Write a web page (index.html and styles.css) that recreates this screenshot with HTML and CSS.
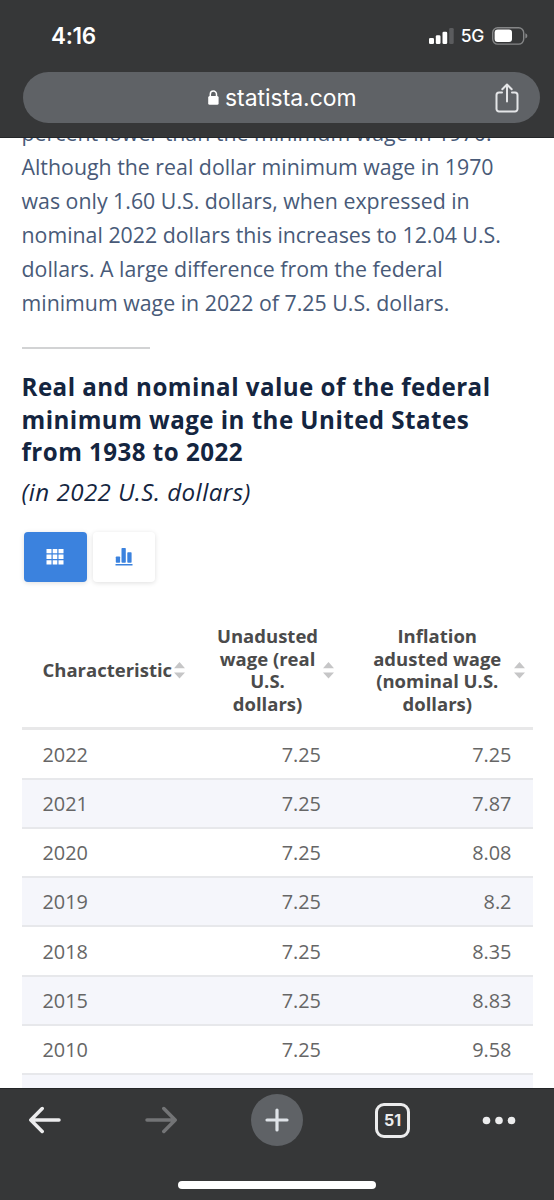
FILE: index.html
```html
<!DOCTYPE html>
<html lang="en">
<head>
<meta charset="utf-8">
<title>statista.com</title>
<link rel="stylesheet" href="styles.css">
</head>
<body>
<div class="screen">
  <header class="top">
    <div class="status">
      <span class="time">4:16</span>
      <div class="indicators">
        <svg class="signal" width="25" height="16" viewBox="0 0 25 16"><rect x="0" y="10" width="5" height="6" rx="1.3" fill="#fff"/><rect x="6.8" y="7.3" width="4.7" height="8.7" rx="1.3" fill="#fff"/><rect x="13.5" y="3.7" width="4.7" height="12.3" rx="1.3" fill="#fff"/><rect x="20.2" y="0" width="4.5" height="16" rx="1.3" fill="#5b5c5e"/></svg>
        <span class="network">5G</span>
        <svg class="battery" width="36" height="18" viewBox="0 0 36 18"><rect x=".7" y=".7" width="31" height="16.4" rx="5" fill="none" stroke="#858687" stroke-width="1.4"/><rect x="2.6" y="2.6" width="17.4" height="12.4" rx="3" fill="#fff"/><path d="M33.400 6.200Q35.400 7 35.400 8.900T33.400 11.600z" fill="#858687"/></svg>
      </div>
    </div>
    <div class="address">
      <svg class="lock" width="11" height="15" viewBox="0 0 11 15"><rect x=".2" y="6" width="10.400" height="8.700" rx="1.500" fill="#fff"/><path d="M2.300 7V4.200a3.100 3.100 0 0 1 6.200 0V7" fill="none" stroke="#fff" stroke-width="1.500"/></svg>
      <span class="domain">statista.com</span>
      <svg class="share" width="24" height="30" viewBox="0 0 24 30" fill="none" stroke="#e4e5e7" stroke-width="2" stroke-linecap="round" stroke-linejoin="round"><path d="M7 9.500H4A2.500 2.500 0 0 0 1.500 12v14A2.500 2.500 0 0 0 4 28.500h16a2.500 2.500 0 0 0 2.500-2.500V12A2.500 2.500 0 0 0 20 9.500h-3M12 18.500V2M7.300 6.300 12 1.500l4.700 4.800"/></svg>
    </div>
  </header>
  <main class="page">
    <p class="intro">percent lower than the minimum wage in 1970.<br>Although the real dollar minimum wage in 1970<br>was only 1.60 U.S. dollars, when expressed in<br>nominal 2022 dollars this increases to 12.04 U.S.<br>dollars. A large difference from the federal<br>minimum wage in 2022 of 7.25 U.S. dollars.</p>
    <div class="divider"></div>
    <h1 class="title">Real and nominal value of the federal<br>minimum wage in the United States<br>from 1938 to 2022</h1>
    <p class="subtitle">(in 2022 U.S. dollars)</p>
    <div class="views">
      <div class="view active"><svg width="18" height="16" viewBox="0 0 18 16" fill="#fff"><path d="M.5 0h5v4.200h-5zM6.700 0h4.600v4.200H6.700zM12.500 0h5v4.200h-5zM.5 5.500h5v4.400h-5zM6.700 5.500h4.600v4.400H6.700zM12.500 5.500h5v4.400h-5zM.5 11.200h5v4.200h-5zM6.700 11.200h4.600v4.200H6.700zM12.500 11.200h5v4.200h-5z"/></svg></div>
      <div class="view"><svg width="18" height="18" viewBox="0 0 18 18" fill="#3b82de"><rect x=".8" y="8.500" width="4.300" height="6.300" rx=".7"/><rect x="6.500" y="0" width="4.300" height="14.800" rx=".7"/><rect x="12.300" y="4.200" width="4.300" height="10.600" rx=".7"/><rect x=".5" y="16" width="17" height="1.500"/></svg></div>
    </div>
    <div class="table">
      <div class="row head">
        <div class="name">Characteristic<svg class="sort" width="11" height="17" viewBox="0 0 11 17"><path d="M5.500 0 11 6.200H0zM0 10.600h11l-5.500 6z"/></svg></div>
        <div class="real">Unadusted<br>wage (real<br>U.S.<br>dollars)<svg class="sort" width="11" height="17" viewBox="0 0 11 17"><path d="M5.500 0 11 6.200H0zM0 10.600h11l-5.500 6z"/></svg></div>
        <div>Inflation<br>adusted wage<br>(nominal U.S.<br>dollars)<svg class="sort" width="11" height="17" viewBox="0 0 11 17"><path d="M5.500 0 11 6.200H0zM0 10.600h11l-5.500 6z"/></svg></div>
      </div>
      <div class="row"><span>2022</span><span>7.25</span><span>7.25</span></div>
      <div class="row shade"><span>2021</span><span>7.25</span><span>7.87</span></div>
      <div class="row"><span>2020</span><span>7.25</span><span>8.08</span></div>
      <div class="row shade"><span>2019</span><span>7.25</span><span>8.2</span></div>
      <div class="row"><span>2018</span><span>7.25</span><span>8.35</span></div>
      <div class="row shade"><span>2015</span><span>7.25</span><span>8.83</span></div>
      <div class="row"><span>2010</span><span>7.25</span><span>9.58</span></div>
      <div class="row shade"></div>
    </div>
  </main>
  <footer class="bottom">
    <div class="tools">
      <svg width="32" height="28" viewBox="0 0 32 28" fill="none" stroke="#ececed" stroke-width="3.500" stroke-linecap="round" stroke-linejoin="round"><path d="M30 14H2.500M13.200 2.500 1.800 14l11.400 11.500"/></svg>
      <svg class="forward" width="32" height="28" viewBox="0 0 32 28" fill="none" stroke="#737476" stroke-width="3.500" stroke-linecap="round" stroke-linejoin="round"><path d="M2 14h27.500M18.800 2.500 30.200 14 18.800 25.500"/></svg>
      <div class="plus"><svg width="24" height="24" viewBox="0 0 24 24" stroke="#dfe3e8" stroke-width="3.200" stroke-linecap="round"><path d="M2 12h20M12 2v20"/></svg></div>
      <div class="tabs">51</div>
      <svg width="34" height="9" viewBox="0 0 34 9" fill="#ececed"><circle cx="4.500" cy="4.500" r="3.800"/><circle cx="17" cy="4.500" r="3.800"/><circle cx="29.500" cy="4.500" r="3.800"/></svg>
    </div>
    <div class="home"></div>
  </footer>
</div>
</body>
</html>
```
FILE: styles.css
```css
* { box-sizing: border-box; }
body { margin: 0; background: #fff; }
p, h1 { margin: 0; }
svg { display: block; flex: none; }
.screen {
  width: 554px; height: 1200px; overflow: hidden;
  display: flex; flex-direction: column;
  font-family: "Open Sans", sans-serif;
}
.top { height: 138px; flex: none; background: #363738; border-bottom: 1px solid #242628; }
.status { height: 72px; padding: 0 26px 2px 51px; display: flex; justify-content: space-between; align-items: center; color: #fff; font-family: Inter, sans-serif; }
.time { font-size: 22.5px; font-weight: 600; letter-spacing: -.3px; }
.indicators { display: flex; align-items: center; }
.signal, .battery { margin-top: 1px; }
.network { font-size: 17.5px; font-weight: 450; margin: 1px 8px 0 7px; letter-spacing: -.3px; }
.address { height: 51px; margin: 0 14px 0 23px; padding: 0 21px 0 185px; border-radius: 26px; background: #5f6266; display: flex; align-items: center; color: #fff; }
.domain { font: 400 22.9px Inter, sans-serif; margin-left: 6px; }
.share { margin-left: auto; }
.page { height: 950px; flex: none; overflow: hidden; padding: 0 21.5px; }
.intro { margin-top: -22.4px; font-size: 21.33px; line-height: 34.1px; color: #485a78; white-space: nowrap; }
.divider { width: 128px; height: 2px; margin-top: 26.4px; background: #d2d3d4; }
.title { margin-top: 22.5px; font-size: 24.15px; line-height: 32.700px; font-weight: 700; letter-spacing: .46px; color: #142540; white-space: nowrap; }
.subtitle { margin-top: 6.5px; font-size: 24.15px; line-height: 32.700px; letter-spacing: .44px; font-style: italic; color: #142540; }
.views { display: flex; gap: 6px; margin: 24px 0 0 2.5px; }
.view { width: 62.5px; height: 50px; border-radius: 4px; background: #fff; box-shadow: 0 1px 5px rgba(0,0,0,.13); display: flex; align-items: center; justify-content: center; }
.active { background: #3b82de; }
.table { margin-top: 31px; width: 511px; }
.row { height: 49.260px; display: grid; grid-template-columns: 174.5px 146px 190.5px; align-items: center; border-bottom: 2px solid #e7e8eb; font-size: 19.900px; color: #666; }
.row > span { padding: 0 21px; text-align: right; }
.row > span:first-child { text-align: left; }
.shade { background: #f5f6fb; }
.head { height: 117px; border-bottom: 3px solid #e8e8e9; font-size: 18.500px; line-height: 22.720px; font-weight: 700; color: #4b4b4b; text-align: center; }
.head > div { position: relative; white-space: nowrap; }
.head .name { text-align: left; padding-left: 21px; }
.head .real { padding-right: 3px; }
.sort { position: absolute; right: 8px; top: 50%; margin-top: -8px; fill: #c6c6c7; }
.name .sort { right: 11px; }
.bottom { height: 112px; flex: none; border-top: 1px solid #242628; background: #363738; display: flex; flex-direction: column; align-items: center; }
.tools { width: 554px; height: 62px; padding: 0 38px 0 29px; display: flex; align-items: center; justify-content: space-between; }
.forward { margin: 0 2px 0 12px; }
.plus { width: 52px; height: 52px; border-radius: 50%; background: #5f6266; display: flex; align-items: center; justify-content: center; }
.tabs { width: 35px; height: 35px; border: 3px solid #ececed; border-radius: 9px; color: #ececed; font: 700 16px/29px Inter, sans-serif; text-align: center; }
.home { width: 198px; height: 8px; border-radius: 4px; background: #fff; margin-top: 30px; }
```
